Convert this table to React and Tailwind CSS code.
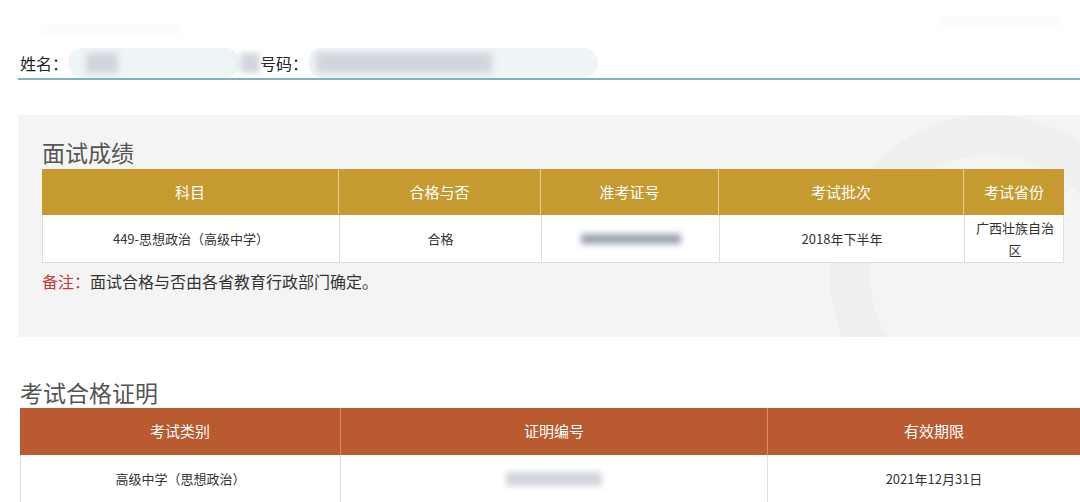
import React from "react";

const font = "font-['Noto_Sans_CJK_SC','Noto_Sans',sans-serif]";

function Smudge({ className }) {
  return <div className={`blur-[3px] ${className}`} />;
}

export default function App() {
  const goldCols = "grid grid-cols-[296px_202px_178px_245px_101px]";
  const certCols = "grid grid-cols-[320px_427px_333px]";

  return (
    <div className={`w-[1080px] h-[502px] overflow-hidden bg-white ${font}`}>
      {/* faint header remains */}
      <div className="h-[48px] flex items-start pt-[26px] pl-[40px]">
        <Smudge className="w-[140px] h-[8px] bg-gray-50" />
        <div className="flex-1" />
        <Smudge className="w-[120px] h-[8px] bg-gray-50 mr-[20px] -mt-[8px]" />
      </div>

      {/* name / id row */}
      <div className="ml-[18px] h-[32px] border-b-2 border-[#7fb3ba] flex items-center text-[16px] text-[#222]">
        <span className="pl-[2px]">姓名：</span>
        <div className="flex items-center bg-[#eef5f6] h-[30px] w-[172px] rounded-full">
          <Smudge className="ml-[18px] w-[32px] h-[20px] bg-gray-300" />
        </div>
        <Smudge className="w-[20px] h-[20px] bg-gray-300" />
        <span>号码：</span>
        <div className="flex items-center bg-[#eef5f6] h-[30px] w-[290px] rounded-full">
          <Smudge className="ml-[8px] w-[176px] h-[20px] bg-gray-300" />
        </div>
      </div>

      {/* interview score panel */}
      <div className="ml-[18px] mt-[35px] h-[222px] bg-[#f4f4f4] pt-[22px] pl-[24px] relative overflow-hidden">
        <div className="absolute right-[-70px] top-[0px] w-[320px] h-[320px] rounded-full border-[40px] border-[#efefef]" />
        <div className="relative">
          <h2 className="text-[23px] leading-[31px] text-[#555] font-normal">面试成绩</h2>
          <div className="w-[1022px] mt-[1px]">
            <div className={`${goldCols} bg-[#c49a31] text-white text-[15px] h-[46px]`}>
              {["科目", "合格与否", "准考证号", "考试批次", "考试省份"].map((t, i) => (
                <div
                  key={t}
                  className={`flex items-center justify-center ${i > 0 ? "border-l border-[#e6cf86]" : ""}`}
                >
                  {t}
                </div>
              ))}
            </div>
            <div className={`${goldCols} bg-white text-[13px] text-[#333] h-[48px] border border-t-0 border-[#dddddd]`}>
              <div className="flex items-center justify-center">449-思想政治（高级中学）</div>
              <div className="flex items-center justify-center border-l border-[#dddddd]">合格</div>
              <div className="flex items-center justify-center border-l border-[#dddddd]">
                <Smudge className="w-[100px] h-[10px] bg-gray-400" />
              </div>
              <div className="flex items-center justify-center border-l border-[#dddddd]">2018年下半年</div>
              <div className="flex items-center justify-center text-center leading-[22px] px-[8px] border-l border-[#dddddd]">
                广西壮族自治区
              </div>
            </div>
          </div>
          <p className="mt-[7px] text-[16px] leading-[22px] text-[#333]">
            <span className="text-[#c33a3a]">备注：</span>面试合格与否由各省教育行政部门确定。
          </p>
        </div>
      </div>

      {/* certificate */}
      <div className="ml-[20px] mt-[40px]">
        <h2 className="text-[23px] leading-[31px] text-[#555] font-normal">考试合格证明</h2>
        <div className={`${certCols} bg-[#b95a30] text-white text-[15px] h-[47px]`}>
          {["考试类别", "证明编号", "有效期限"].map((t, i) => (
            <div
              key={t}
              className={`flex items-center justify-center ${i > 0 ? "border-l border-[#d98a66]" : ""}`}
            >
              {t}
            </div>
          ))}
        </div>
        <div className={`${certCols} bg-white text-[13px] text-[#333] h-[48px]`}>
          <div className="flex items-center justify-center border-l border-[#dddddd]">高级中学（思想政治）</div>
          <div className="flex items-center justify-center border-l border-[#dddddd]">
            <Smudge className="w-[96px] h-[14px] bg-gray-300" />
          </div>
          <div className="flex items-center justify-center border-l border-[#dddddd]">2021年12月31日</div>
        </div>
      </div>
    </div>
  );
}
